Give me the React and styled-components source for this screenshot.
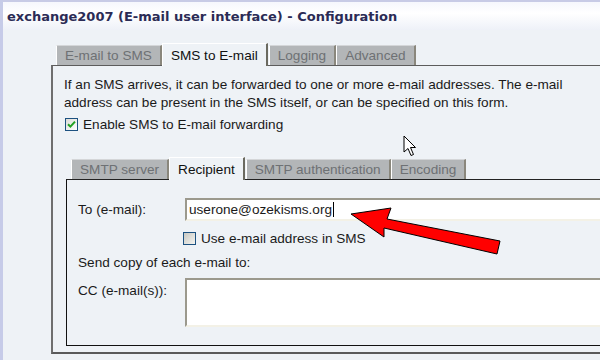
import React from 'react';
import styled, { createGlobalStyle } from 'styled-components';

const GlobalStyle = createGlobalStyle`
  html, body {
    margin: 0;
    padding: 0;
    width: 600px;
    height: 360px;
    overflow: hidden;
    background: #eef2f6;
  }
`;

const Window = styled.div`
  position: relative;
  width: 600px;
  height: 360px;
  overflow: hidden;
  background: #eef2f6;
  border-left: 3px solid #c6cbe8;
  box-sizing: border-box;
  font-family: "Liberation Sans", Arial, sans-serif;
  font-size: 13.6px;
  color: #1a1a1a;
`;

const TitleBar = styled.div`
  height: 30px;
  box-sizing: border-box;
  border-top: 2px solid #c8cbe6;
  background: linear-gradient(#f6f7fd, #ffffff 40%, #eef1f8);
  display: flex;
  align-items: center;
  padding-left: 4px;
  font-family: "DejaVu Sans", Verdana, sans-serif;
  font-weight: bold;
  font-size: 13px;
  color: #2b2b55;
  white-space: nowrap;
`;

const Body = styled.div`
  padding: 12px 0 0 48px;
`;

const TabStrip = styled.div`
  display: flex;
  align-items: flex-end;
  padding-left: 5px;
  height: 23px;
`;

const Tab = styled.div`
  height: ${p => (p.$active ? 23 : 20)}px;
  box-sizing: border-box;
  padding: 0 8px;
  display: flex;
  align-items: center;
  white-space: nowrap;
  margin-right: ${p => (p.$active ? 1 : 0)}px;
  margin-bottom: ${p => (p.$active ? -1 : 0)}px;
  background: ${p => (p.$active ? '#eef2f6' : '#b3b6b8')};
  color: ${p => (p.$active ? '#111' : '#6e7174')};
  border-top: 1px solid ${p => (p.$active ? '#fff' : '#d4d6d8')};
  border-left: 1px solid #fff;
  border-right: 2px solid ${p => (p.$active ? '#6b6a60' : '#8a877c')};
  z-index: ${p => (p.$active ? 2 : 1)};
`;

const Panel = styled.div`
  width: 570px;
  height: 289px;
  box-sizing: border-box;
  border-top: 1px solid #5c5c5c;
  border-left: 2px solid #6e6e6e;
  border-bottom: 2px solid #5a5a5a;
  padding: 10px 0 0 11px;
`;

const InnerPanel = styled.div`
  width: 560px;
  height: 167px;
  box-sizing: border-box;
  border-top: 1px solid #222;
  border-left: 1px solid #111;
  border-bottom: 1px solid #111;
  padding: 18px 0 0 11px;
  display: flex;
  flex-direction: column;
`;

const TabSection = styled.div`
  margin: 24px 0 0 2px;
`;

const Para = styled.p`
  margin: 0;
  line-height: 18px;
  white-space: nowrap;
`;

const CheckRow = styled.label`
  display: flex;
  align-items: center;
  gap: 5px;
  margin: ${p => p.$margin};
  white-space: nowrap;
`;

const Box = styled.span`
  width: 13px;
  height: 13px;
  box-sizing: border-box;
  border: 1px solid #1c5180;
  background: ${p => (p.$checked
    ? 'linear-gradient(135deg, #dcdcd7, #fff)'
    : 'linear-gradient(135deg, #c8c8c2, #f4f4f0)')};
  display: flex;
  align-items: center;
  justify-content: center;
`;

const FieldRow = styled.div`
  display: flex;
  align-items: ${p => (p.$top ? 'flex-start' : 'center')};
  margin: ${p => p.$margin};
`;

const Label = styled.span`
  width: 107px;
  flex: none;
  white-space: nowrap;
  padding-top: ${p => (p.$top ? 5 : 0)}px;
`;

const TextInput = styled.div`
  height: ${p => p.$height}px;
  width: 440px;
  box-sizing: border-box;
  background: #fff;
  border-top: 2px solid #9b998d;
  border-left: 2px solid #9b998d;
  border-bottom: 2px solid #f3f1e6;
  border-right: 2px solid #f3f1e6;
  padding-left: 2px;
  display: flex;
  align-items: ${p => (p.$area ? 'flex-start' : 'center')};
  white-space: nowrap;
`;

const Caret = styled.span`
  display: inline-block;
  width: 1px;
  height: 15px;
  background: #000;
  margin-left: 1px;
`;

const Plain = styled.div`
  margin: ${p => p.$margin};
  white-space: nowrap;
`;

const Overlay = styled.svg`
  position: absolute;
  left: 0;
  top: 0;
  pointer-events: none;
`;

const Check = () => (
  <svg width="9" height="9" viewBox="0 0 9 9">
    <path d="M1 4.2 L3.4 6.6 L8 1.6" stroke="#21a121" strokeWidth="2" fill="none" />
  </svg>
);

const outerTabs = ['E-mail to SMS', 'SMS to E-mail', 'Logging', 'Advanced'];
const innerTabs = ['SMTP server', 'Recipient', 'SMTP authentication', 'Encoding'];

export default function App() {
  return (
    <>
      <GlobalStyle />
      <Window>
        <TitleBar>exchange2007 (E-mail user interface) - Configuration</TitleBar>
        <Body>
          <TabStrip>
            {outerTabs.map((t, i) => <Tab key={t} $active={i === 1}>{t}</Tab>)}
          </TabStrip>
          <Panel>
            <Para>If an SMS arrives, it can be forwarded to one or more e-mail addresses. The e-mail</Para>
            <Para>address can be present in the SMS itself, or can be specified on this form.</Para>
            <CheckRow $margin="5px 0 0 1px">
              <Box $checked><Check /></Box>
              Enable SMS to E-mail forwarding
            </CheckRow>
            <TabSection>
              <TabStrip>
                {innerTabs.map((t, i) => <Tab key={t} $active={i === 1}>{t}</Tab>)}
              </TabStrip>
              <InnerPanel>
                <FieldRow $margin="0 0 10px 0">
                  <Label>To (e-mail):</Label>
                  <TextInput $height={23}>userone@ozekisms.org<Caret /></TextInput>
                </FieldRow>
                <CheckRow $margin="0 0 0 105px">
                  <Box />
                  Use e-mail address in SMS
                </CheckRow>
                <Plain $margin="9px 0 0 0">Send copy of each e-mail to:</Plain>
                <FieldRow $top $margin="8px 0 0 0">
                  <Label $top>CC (e-mail(s)):</Label>
                  <TextInput $height={49} $area />
                </FieldRow>
              </InnerPanel>
            </TabSection>
          </Panel>
        </Body>
        <Overlay width="600" height="360" viewBox="0 0 600 360">
          <polygon
            points="348,214 388,208 384,219 497,241 494,254 381,228 381,237"
            fill="#ff0000"
            stroke="#000"
            strokeWidth="1"
            strokeLinejoin="round"
          />
          <path
            d="M401 136 L401 152 L405 148.5 L408 155.5 L410.5 154.5 L407.5 147.5 L412.5 147.5 Z"
            fill="#fff"
            stroke="#000"
            strokeWidth="1"
          />
        </Overlay>
      </Window>
    </>
  );
}
